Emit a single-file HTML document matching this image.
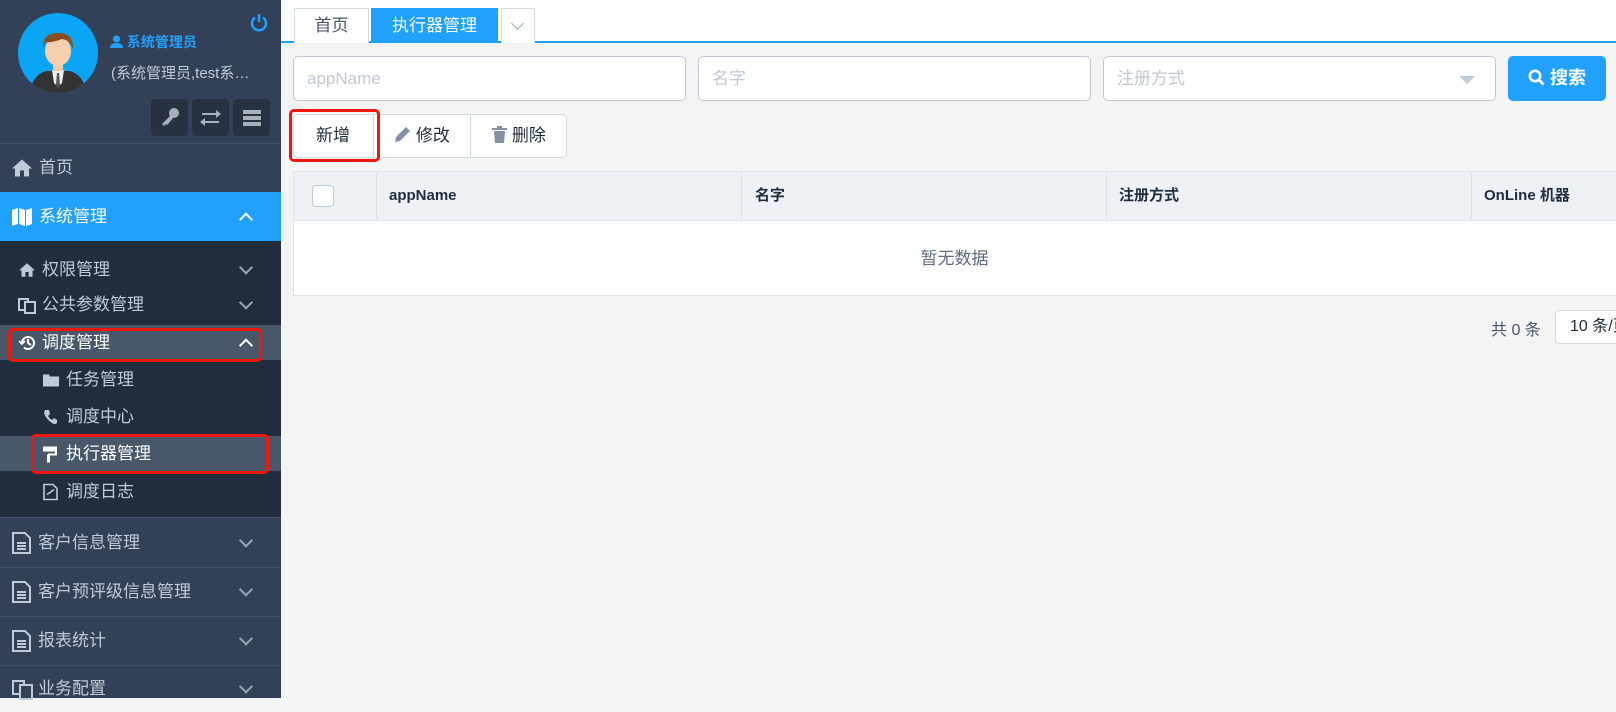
<!DOCTYPE html>
<html><head><meta charset="utf-8"><style>
*{margin:0;padding:0;box-sizing:border-box}
body{width:1616px;height:698px;overflow:hidden;background:#f4f4f4;font-family:"Liberation Sans","Noto Sans CJK SC",sans-serif;position:relative}
.a{position:absolute}
#side{left:0;top:0;width:281px;height:698px;background:#324157}
.row{position:absolute;left:0;width:281px;color:#bfcbd9;font-size:17px}
.row>span,.row>svg{position:absolute;top:50%;transform:translateY(-50%);white-space:nowrap;line-height:20px}
.chev{position:absolute;right:30px;top:50%;width:10px;height:10px;border-right:2px solid #9aa5b4;border-bottom:2px solid #9aa5b4;transform:translateY(-75%) rotate(45deg)}
.chev.up{transform:translateY(-25%) rotate(-135deg);border-color:#fff}
.btn3{position:absolute;top:99px;width:37px;height:37px;background:#283142;border-radius:4px}
.inp{position:absolute;top:56px;height:45px;background:#fff;border:1px solid #bfcbd9;border-radius:5px;color:#c0c8d4;font-size:17px;padding-left:13px;line-height:43px}
.th{position:absolute;top:171px;height:50px;line-height:50px;font-weight:bold;font-size:15px;color:#1f2d3d}
.sep{position:absolute;top:171px;width:1px;height:50px;background:#dfe4ec}
</style></head><body>
<div id="side" class="a">
  <svg class="a" style="left:18px;top:13px" width="80" height="80" viewBox="0 0 80 80">
    <defs><clipPath id="c"><circle cx="40" cy="40" r="40"/></clipPath></defs>
    <circle cx="40" cy="40" r="40" fill="#0aa5f5"/>
    <g clip-path="url(#c)">
      <path d="M12 80 Q14 62 28 58 L52 58 Q66 62 68 80Z" fill="#333"/>
      <path d="M34 57 L46 57 L44 70 L40 74 L36 70Z" fill="#eee"/>
      <path d="M39 60 L41 60 L42 72 L40 76 L38 72Z" fill="#555"/>
      <rect x="35" y="48" width="10" height="10" fill="#f2c8a5"/>
      <ellipse cx="40" cy="38" rx="13" ry="15" fill="#f5cfae"/>
      <path d="M25 36 Q24 20 40 20 Q56 20 55 36 Q52 27 44 26 Q34 30 27 29Z" fill="#8a4d1e"/>
    </g>
  </svg>
  <svg class="a" style="left:250px;top:13px" width="18" height="19" viewBox="0 0 18 19"><path d="M5 4.5A7 7 0 1 0 13 4.5" fill="none" stroke="#20a0ff" stroke-width="2.5"/><line x1="9" y1="1" x2="9" y2="9" stroke="#20a0ff" stroke-width="2.5"/></svg>
  <div class="a" style="left:110px;top:32px;color:#20a0ff;font-weight:bold;font-size:14px;white-space:nowrap">
    <svg width="13" height="13" viewBox="0 0 13 13" style="vertical-align:-1px"><circle cx="6.5" cy="4" r="3.5" fill="#20a0ff"/><path d="M0 13Q0 8 6.5 8Q13 8 13 13Z" fill="#20a0ff"/></svg>&nbsp;系统管理员</div>
  <div class="a" style="left:111px;top:62px;color:#bfcbd9;font-size:15px;white-space:nowrap">(系统管理员,test系…</div>
  <div class="btn3" style="left:151px"><svg width="37" height="37" viewBox="0 0 37 37"><circle cx="23" cy="14" r="5" fill="#a8b0bb"/><path d="M20 16 L11 25 L13 27 L15 25 L16 26 L18 24 L22 19Z" fill="#a8b0bb"/></svg></div>
  <div class="btn3" style="left:192px"><svg width="37" height="37" viewBox="0 0 37 37" fill="#a8b0bb"><path d="M10 14h14v-3l5 4-5 4v-3H10z"/><path d="M27 22H13v-3l-5 4 5 4v-3h14z"/></svg></div>
  <div class="btn3" style="left:233px"><svg width="37" height="37" viewBox="0 0 37 37" fill="#a8b0bb"><rect x="10" y="11" width="18" height="4"/><rect x="10" y="17" width="18" height="4"/><rect x="10" y="23" width="18" height="4"/></svg></div>
  <div class="a" style="left:0;top:143px;width:281px;height:1px;background:#45536a"></div>
  <div class="row" style="top:144px;height:48px"><svg style="left:11px" width="22" height="19" viewBox="0 0 22 19"><path d="M11 1 L21 10 L18 10 L18 18 L13 18 L13 12 L9 12 L9 18 L4 18 L4 10 L1 10Z" fill="#bfcbd9"/></svg><span style="left:39px">首页</span></div>
  <div class="row" style="top:192px;height:49px;background:#20a0ff;color:#fff"><svg style="left:11px" width="22" height="20" viewBox="0 0 22 20"><path d="M1 3 L7 1 L7 17 L1 19Z M8 1 L14 3 L14 19 L8 17Z M15 3 L21 1 L21 17 L15 19Z" fill="#fff"/></svg><span style="left:39px">系统管理</span><i class="chev up"></i></div>
  <div class="a" style="left:0;top:241px;width:281px;height:276px;background:#1f2d3d"></div>
  <div class="row" style="top:252px;height:36px"><svg style="left:18px" width="18" height="15" viewBox="0 0 22 19"><path d="M11 1 L21 10 L18 10 L18 18 L13 18 L13 12 L9 12 L9 18 L4 18 L4 10 L1 10Z" fill="#bfcbd9"/></svg><span style="left:42px">权限管理</span><i class="chev"></i></div>
  <div class="row" style="top:287px;height:36px"><svg style="left:18px" width="18" height="18" viewBox="0 0 18 18" fill="none" stroke="#bfcbd9" stroke-width="2"><rect x="1" y="3" width="9" height="11"/><rect x="7" y="6" width="10" height="11" fill="#1f2d3d"/></svg><span style="left:42px">公共参数管理</span><i class="chev"></i></div>
  <div class="row" style="top:325px;height:35px;background:#48576a;color:#fff"><svg style="left:18px" width="19" height="18" viewBox="0 0 19 18" fill="none" stroke="#fff" stroke-width="2"><path d="M4 9A6 6 0 1 1 6 13.5"/><path d="M10 5v4l3 2"/><path d="M1 7l3 3 3-3" stroke-width="1.6"/></svg><span style="left:42px">调度管理</span><i class="chev up"></i></div>
  <div class="a" style="left:8px;top:328px;width:254px;height:34px;border:3px solid #f2160f;border-radius:5px"></div>
  <div class="row" style="top:362px;height:36px"><svg style="left:43px" width="16" height="13" viewBox="0 0 16 13"><path d="M0 1h6l1 2h9v10H0z" fill="#bfcbd9"/></svg><span style="left:66px">任务管理</span></div>
  <div class="row" style="top:399px;height:36px"><svg style="left:43px" width="15" height="16" viewBox="0 0 15 16"><path d="M2 1 L6 1 L7 5 L5 7 Q7 10 9 11 L11 9 L14 11 L14 14 Q12 16 9 14 Q3 10 1 4Z" fill="#bfcbd9"/></svg><span style="left:66px">调度中心</span></div>
  <div class="row" style="top:436px;height:35px;background:#48576a;color:#fff"><svg style="left:42px" width="17" height="17" viewBox="0 0 17 17" fill="#fff"><rect x="1" y="1" width="14" height="5"/><rect x="13" y="5" width="2" height="4"/><rect x="6" y="8" width="9" height="2"/><rect x="5" y="9" width="3" height="8"/></svg><span style="left:66px">执行器管理</span></div>
  <div class="a" style="left:31px;top:434px;width:238px;height:40px;border:3px solid #f2160f;border-radius:5px"></div>
  <div class="row" style="top:474px;height:36px"><svg style="left:43px" width="15" height="17" viewBox="0 0 15 17" fill="none" stroke="#bfcbd9" stroke-width="1.6"><path d="M1 1h9l4 4v11H1z"/><path d="M4 11l3-2 4-3"/></svg><span style="left:66px">调度日志</span></div>
  <div class="row" style="top:517px;height:50px;border-top:1px solid #45536a"><svg style="left:12px" width="19" height="22" viewBox="0 0 19 22" fill="none" stroke="#bfcbd9" stroke-width="2"><path d="M1 1h12l5 5v15H1z"/><path d="M5 11h9M5 14h9M5 17h9"/></svg><span style="left:38px">客户信息管理</span><i class="chev"></i></div>
  <div class="row" style="top:567px;height:49px;border-top:1px solid #45536a"><svg style="left:12px" width="19" height="22" viewBox="0 0 19 22" fill="none" stroke="#bfcbd9" stroke-width="2"><path d="M1 1h12l5 5v15H1z"/><path d="M5 11h9M5 14h9M5 17h9"/></svg><span style="left:38px">客户预评级信息管理</span><i class="chev"></i></div>
  <div class="row" style="top:616px;height:49px;border-top:1px solid #45536a"><svg style="left:12px" width="19" height="22" viewBox="0 0 19 22" fill="none" stroke="#bfcbd9" stroke-width="2"><path d="M1 1h12l5 5v15H1z"/><path d="M5 11h9M5 14h9M5 17h9"/></svg><span style="left:38px">报表统计</span><i class="chev"></i></div>
  <div class="row" style="top:665px;height:47px;border-top:1px solid #45536a"><svg style="left:12px" width="22" height="22" viewBox="0 0 22 22" fill="none" stroke="#bfcbd9" stroke-width="2"><rect x="1" y="3" width="11" height="13"/><rect x="8" y="7" width="12" height="14" fill="#324157"/></svg><span style="left:38px">业务配置</span><i class="chev"></i></div>
</div>

<div class="a" style="left:281px;top:0;width:1335px;height:43px;background:#fff;border-bottom:2px solid #20a0ff"></div>
<div class="a" style="left:294px;top:8px;width:75px;height:35px;border:1px solid #d1dbe5;border-bottom:none;background:#fff;text-align:center;line-height:33px;font-size:17px;color:#48576a">首页</div>
<div class="a" style="left:371px;top:8px;width:127px;height:35px;background:#20a0ff;text-align:center;line-height:35px;font-size:17px;color:#fff">执行器管理</div>
<div class="a" style="left:501px;top:8px;width:34px;height:35px;border:1px solid #d1dbe5;border-bottom:none;background:#fff"><i style="position:absolute;left:11px;top:10px;width:9px;height:9px;border-right:1.5px solid #97a8be;border-bottom:1.5px solid #97a8be;transform:rotate(45deg)"></i></div>

<div class="inp" style="left:293px;width:393px">appName</div>
<div class="inp" style="left:698px;width:393px">名字</div>
<div class="inp" style="left:1103px;width:393px">注册方式<i style="position:absolute;right:20px;top:19px;border-left:8px solid transparent;border-right:8px solid transparent;border-top:8px solid #bfcbd9"></i></div>
<div class="a" style="left:1508px;top:56px;width:98px;height:45px;background:#20a0ff;border-radius:5px;color:#fff;font-weight:bold;font-size:18px;line-height:45px;text-align:center"><svg width="17" height="17" viewBox="0 0 17 17" style="vertical-align:-2px"><circle cx="7" cy="7" r="5.2" fill="none" stroke="#fff" stroke-width="2.6"/><line x1="11" y1="11" x2="15.5" y2="15.5" stroke="#fff" stroke-width="2.8"/></svg> 搜索</div>

<div class="a" style="left:293px;top:114px;width:274px;height:44px;background:#fff;border:1px solid #d1dbe5;border-radius:5px"></div>
<div class="a" style="left:373px;top:114px;width:1px;height:44px;background:#d1dbe5"></div>
<div class="a" style="left:470px;top:114px;width:1px;height:44px;background:#d1dbe5"></div>
<div class="a" style="left:293px;top:114px;width:80px;height:44px;line-height:44px;text-align:center;font-size:17px;color:#1f2d3d">新增</div>
<div class="a" style="left:374px;top:114px;width:96px;height:44px;line-height:44px;text-align:center;font-size:17px;color:#1f2d3d"><svg width="17" height="17" viewBox="0 0 17 17" style="vertical-align:-2px"><path d="M1 16 L2 11 L12 1 L16 5 L6 15Z" fill="#8391a5"/></svg> 修改</div>
<div class="a" style="left:471px;top:114px;width:96px;height:44px;line-height:44px;text-align:center;font-size:17px;color:#1f2d3d"><svg width="15" height="17" viewBox="0 0 15 17" style="vertical-align:-2px" fill="#8391a5"><rect x="0" y="2" width="15" height="2"/><rect x="5" y="0" width="5" height="2"/><path d="M2 5h11l-1 12H3z"/></svg> 删除</div>
<div class="a" style="left:289px;top:109px;width:91px;height:53px;border:3px solid #f2160f;border-radius:5px"></div>

<div class="a" style="left:293px;top:171px;width:1323px;height:125px;background:#fff;border:1px solid #dfe4ec;border-right:none"></div>
<div class="a" style="left:294px;top:172px;width:1322px;height:49px;background:#eef1f6;border-bottom:1px solid #dfe4ec"></div>
<div class="sep" style="left:376px"></div><div class="sep" style="left:741px"></div><div class="sep" style="left:1106px"></div><div class="sep" style="left:1471px"></div>
<div class="a" style="left:312px;top:185px;width:22px;height:22px;background:#fff;border:1px solid #bfcbd9;border-radius:4px"></div>
<div class="th" style="left:389px">appName</div>
<div class="th" style="left:755px">名字</div>
<div class="th" style="left:1119px">注册方式</div>
<div class="th" style="left:1484px">OnLine 机器</div>
<div class="a" style="left:293px;top:222px;width:1323px;height:73px;line-height:73px;text-align:center;font-size:17px;color:#5e6d82">暂无数据</div>

<div class="a" style="left:1491px;top:316px;font-size:16px;color:#48576a">共 0 条</div>
<div class="a" style="left:1555px;top:310px;width:80px;height:34px;background:#fff;border:1px solid #d1dbe5;border-radius:4px;padding-left:14px;line-height:32px;font-size:16px;color:#1f2d3d;white-space:nowrap">10 条/页</div>
</body></html>
